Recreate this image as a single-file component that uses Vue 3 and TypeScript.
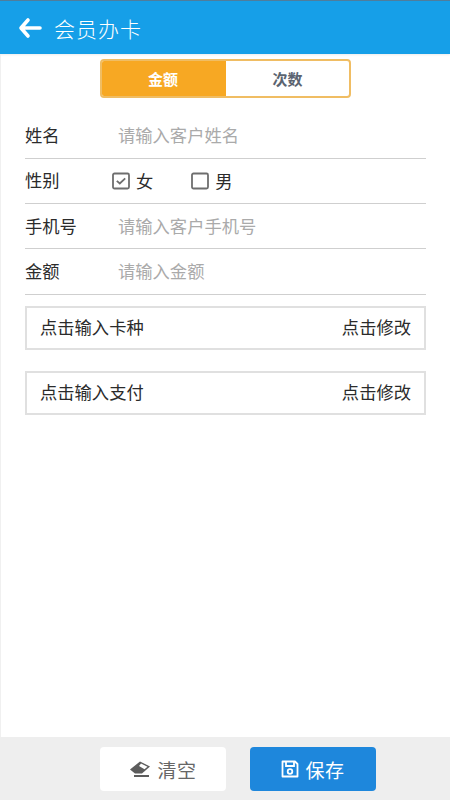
<script setup lang="ts">
const picks = [
  { label: '点击输入卡种', action: '点击修改' },
  { label: '点击输入支付', action: '点击修改' },
]
</script>

<template>
  <div class="page">
    <header class="bar">
      <svg class="back" width="24" height="22" viewBox="0 0 24 22" fill="none" stroke="#fff" stroke-width="3.600" stroke-linecap="round" stroke-linejoin="round">
        <path d="M10 3 3 11l7 8M4 11h18" />
      </svg>
      <span class="title">会员办卡</span>
    </header>

    <main class="content">
      <div class="tabs">
        <div class="tab active">金额</div>
        <div class="tab">次数</div>
      </div>

      <div class="form">
        <div class="row">
          <span class="label">姓名</span>
          <span class="ph">请输入客户姓名</span>
        </div>
        <div class="row">
          <span class="label">性别</span>
          <div class="gender">
            <span class="opt">
              <svg width="18" height="18" viewBox="0 0 18 18" fill="none">
                <rect x="1" y="1.500" width="16" height="15" rx="1.500" stroke="#6e6e6e" stroke-width="1.800" />
                <path d="M4.800 8.800 7.800 11.500 13.200 6.300" stroke="#6e6e6e" stroke-width="1.800" />
              </svg>
              女
            </span>
            <span class="opt">
              <svg width="18" height="18" viewBox="0 0 18 18" fill="none">
                <rect x="1" y="1.500" width="16" height="15" rx="1.500" stroke="#6e6e6e" stroke-width="1.800" />
              </svg>
              男
            </span>
          </div>
        </div>
        <div class="row">
          <span class="label">手机号</span>
          <span class="ph">请输入客户手机号</span>
        </div>
        <div class="row">
          <span class="label">金额</span>
          <span class="ph">请输入金额</span>
        </div>
      </div>

      <div class="picks">
        <div v-for="p in picks" :key="p.label" class="pick">
          <span>{{ p.label }}</span>
          <span>{{ p.action }}</span>
        </div>
      </div>
    </main>

    <footer class="foot">
      <div class="btn clear">
        <svg width="22" height="16" viewBox="0 0 22 16">
          <path d="M1 8.500 11 0.500 21 5.500 13 12.500H6Z" fill="#5c5c5c" />
          <path d="M10 5 12 2.500 18.500 5.700 15.500 8.200Z" fill="#fff" />
          <path d="M5 15h15" stroke="#5c5c5c" stroke-width="2" />
        </svg>
        清空
      </div>
      <div class="btn save">
        <svg width="18" height="18" viewBox="0 0 18 18" fill="none" stroke="#fff" stroke-width="1.800">
          <path d="M1.500 1.500h12.500l2.500 2.500V16.500H1.500Z" stroke-linejoin="round" />
          <path d="M5 2v4h8V2" />
          <circle cx="9" cy="11.500" r="2.300" />
        </svg>
        保存
      </div>
    </footer>
  </div>
</template>

<style>
html, body { margin: 0; padding: 0; background: #fff; }
</style>

<style scoped>
.page {
  width: 450px;
  height: 800px;
  display: flex;
  flex-direction: column;
  font-family: "Noto Sans CJK SC", "Noto Sans", sans-serif;
  color: #2b2b2b;
  background: #fff;
  overflow: hidden;
}
.bar {
  height: 53px;
  border-top: 1px solid #4f7d9c;
  background: #169fe8;
  display: flex;
  align-items: center;
  padding-left: 18px;
  gap: 12px;
  color: #fff;
  box-shadow: 0 1px 2px rgba(0, 0, 0, 0.08);
}
.title { font-size: 21px; letter-spacing: 1px; font-weight: 300; }
.content {
  flex: 1;
  display: flex;
  flex-direction: column;
  padding: 5px 24px 0 24px;
  border-left: 1px solid #f0f0f0;
}
.tabs {
  align-self: flex-start;
  display: flex;
  width: 251px;
  height: 39px;
  margin-left: 75px;
  box-sizing: border-box;
  border: 2px solid #f0bd63;
  border-radius: 4px;
  overflow: hidden;
}
.tab {
  flex: 1;
  display: flex;
  align-items: center;
  justify-content: center;
  font-size: 15px;
  font-weight: 700;
  color: #5b6470;
}
.tab.active { background: #f7a823; color: #fff; margin: -2px 0 -2px -2px; flex: 0 0 126px; }
.form { display: flex; flex-direction: column; margin-top: 15.500px; }
.row {
  height: 44.330px;
  border-bottom: 1px solid #cfcfcf;
  display: flex;
  align-items: center;
  font-size: 17.300px;
}
.label { width: 93px; flex: none; margin-top: -2px; }
.ph { color: #aaa; margin-top: -2px; }
.gender { display: flex; gap: 38px; margin-left: -6px; }
.opt { display: flex; align-items: center; gap: 6px; }
.picks { display: flex; flex-direction: column; gap: 21px; margin-top: 11px; }
.pick {
  height: 44px;
  box-sizing: border-box;
  border: 2px solid #e0e0e0;
  padding: 0 13px 2px;
  display: flex;
  align-items: center;
  justify-content: space-between;
  font-size: 17.300px;
}
.foot {
  height: 63px;
  background: #eee;
  display: flex;
  align-items: flex-start;
  padding: 10px 0 0 100px;
  box-sizing: border-box;
  gap: 24px;
}
.btn {
  width: 126px;
  height: 44px;
  border-radius: 4px;
  display: flex;
  align-items: center;
  justify-content: center;
  gap: 6px;
  font-size: 19px;
  letter-spacing: 0.500px;
}
.clear { background: #fff; color: #666; }
.save { background: #1e87dc; color: #fff; }
</style>
